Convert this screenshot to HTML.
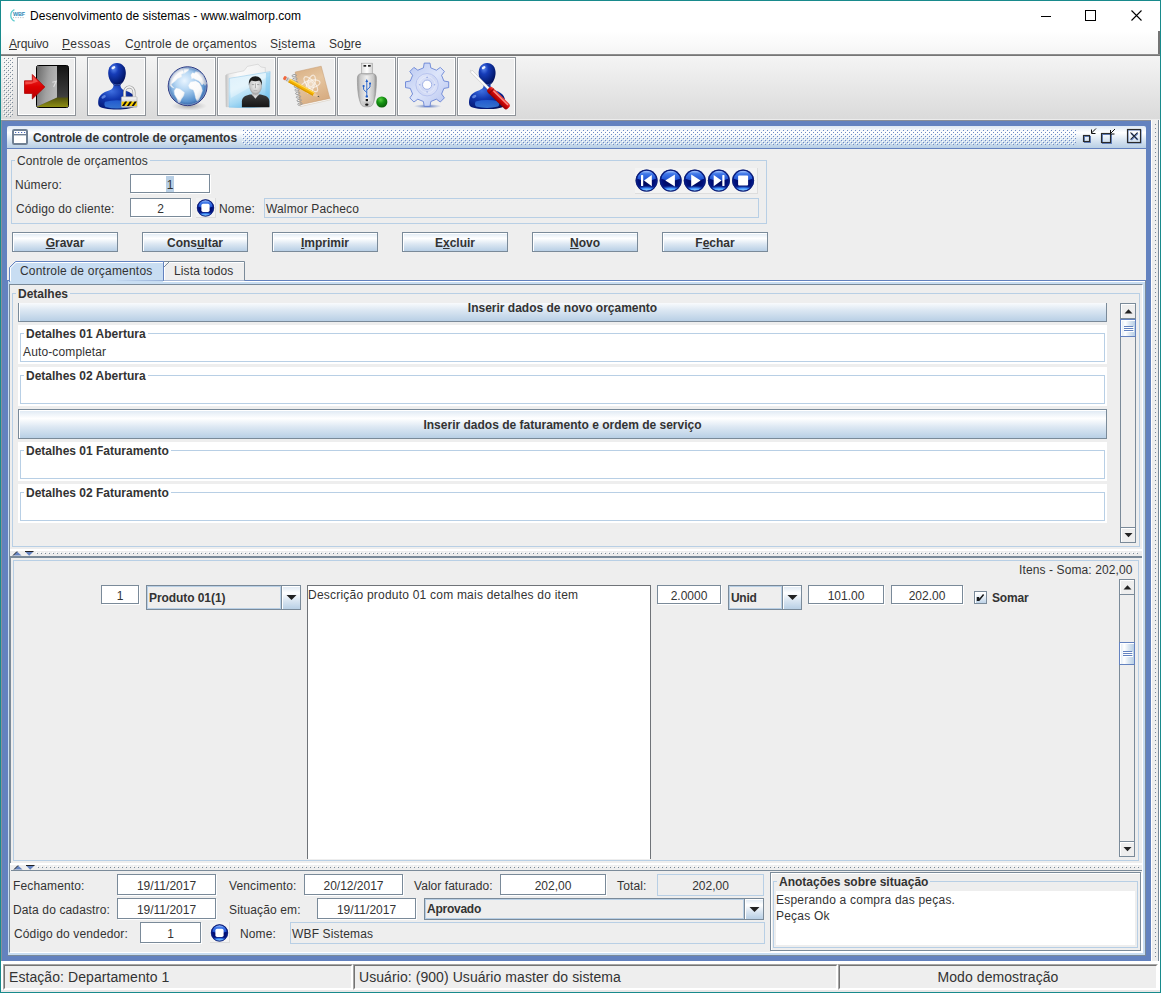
<!DOCTYPE html>
<html><head><meta charset="utf-8"><title>Desenvolvimento de sistemas</title>
<style>
*{box-sizing:border-box;margin:0;padding:0}
html,body{width:1161px;height:993px;overflow:hidden;background:#fff}
body{font-family:"Liberation Sans",sans-serif;font-size:12px;color:#333;position:relative}
.a{position:absolute}
svg{position:absolute;overflow:visible}
.t{position:absolute;white-space:nowrap;line-height:14px;font-size:12px;color:#333;letter-spacing:.13px}
.b{font-weight:bold;letter-spacing:0}
u{text-decoration:underline;text-underline-offset:1px;text-decoration-thickness:1px}
.tf{position:absolute;background:#fff;border:1px solid #7a8a99;box-shadow:1px 1px 0 #fff;text-align:center;line-height:14px;font-size:12px;color:#333;white-space:nowrap}
.ro{position:absolute;background:#eee;border:1px solid #b8cfe5;line-height:14px;font-size:12px;color:#333;white-space:nowrap}
.btn{position:absolute;border:1px solid #7a8a99;background:linear-gradient(#dde8f3 0%,#fff 30%,#dde8f3 60%,#b8cfe5 100%);text-align:center;font-weight:bold;font-size:12px;line-height:14px;color:#333;box-shadow:inset 1px 1px 0 #fff}
.tb{position:absolute;width:59px;height:59px;border:1px solid #8e9399;background:#eee;box-shadow:inset 1px 1px 0 #fff,inset -1px -1px 0 #fff}
.st{position:absolute;top:964px;height:26px;background:#eee;border-style:solid;border-width:1px;border-color:#a6a6a6 #fff #fff #a6a6a6;font-size:14px;line-height:16px;white-space:nowrap;color:#333;letter-spacing:.07px}
.st:before{content:"";position:absolute;left:0;top:0;right:0;bottom:0;border-style:solid;border-width:1px;border-color:#747474 #fff #fff #747474}
.st span{position:absolute;top:4px}
</style></head><body>
<div class="a" style="left:0px;top:0px;width:1161px;height:993px;border:1px solid #188a8c"></div>
<div class="t" style="left:30px;top:9px;color:#000;letter-spacing:.02px">Desenvolvimento de sistemas - www.walmorp.com</div>
<svg style="left:8px;top:8px" width="18" height="16" viewBox="0 0 18 16"><path d="M6.4 1.6A6.4 6.4 0 0 0 6.6 13.2" fill="none" stroke="#62ccd0" stroke-width="1.3"/><text x="5" y="7.7" font-family="Liberation Sans,sans-serif" font-size="5.4" font-weight="bold" fill="#2c86b6" textLength="12">WBF</text><path d="M5 9.6h12" stroke="#8a9aa6" stroke-width="0.7" stroke-dasharray="1 1.4"/></svg>
<svg style="left:1030px;top:1px" width="130" height="30" viewBox="0 0 130 30"><path d="M11 15.5h10" stroke="#000" stroke-width="1"/><rect x="55.5" y="9.5" width="10" height="10" fill="none" stroke="#000" stroke-width="1"/><path d="M101.5 9.5l10 10M111.5 9.5l-10 10" stroke="#000" stroke-width="1.1"/></svg>
<div class="a" style="left:1px;top:31px;width:1159px;height:88px;background:linear-gradient(#fff,#dadada)"></div>
<div class="a" style="left:1158px;top:31px;width:2px;height:24px;background:#757575"></div>
<div class="a" style="left:1px;top:54px;width:1159px;height:2px;background:linear-gradient(#9a9a9a,#6a6a6a)"></div>
<div class="t" style="left:9px;top:37px;letter-spacing:-0.15px"><u>A</u>rquivo</div>
<div class="t" style="left:62px;top:37px;letter-spacing:0.35px"><u>P</u>essoas</div>
<div class="t" style="left:125px;top:37px;letter-spacing:0.18px">C<u>o</u>ntrole de orçamentos</div>
<div class="t" style="left:270px;top:37px;letter-spacing:0.3px">S<u>i</u>stema</div>
<div class="t" style="left:329px;top:37px;letter-spacing:0.1px">So<u>b</u>re</div>
<svg style="left:3px;top:57px" width="10" height="60"><defs><pattern id="bp" width="4" height="4" patternUnits="userSpaceOnUse"><rect x="0" y="0" width="1" height="1" fill="#fff"/><rect x="1" y="1" width="1" height="1" fill="#7a8a99"/><rect x="2" y="2" width="1" height="1" fill="#fff"/><rect x="3" y="3" width="1" height="1" fill="#7a8a99"/></pattern></defs><rect width="10" height="60" fill="url(#bp)"/></svg>
<div class="tb" style="left:17px;top:57px"><svg style="left:-1px;top:-1px" width="59" height="59" viewBox="17 57 59 59"><defs><linearGradient id="d1" x1="0" y1="0" x2="0" y2="1"><stop offset="0" stop-color="#141414"/><stop offset="0.7" stop-color="#3c3c3c"/><stop offset="1" stop-color="#555"/></linearGradient>
<linearGradient id="d2" x1="0" y1="0" x2="1" y2="0.3"><stop offset="0" stop-color="#6a6a6a"/><stop offset="0.6" stop-color="#a2a2a2"/><stop offset="1" stop-color="#b6b6b6"/></linearGradient>
<linearGradient id="d3" x1="0" y1="0" x2="0" y2="1"><stop offset="0" stop-color="#50500e"/><stop offset="1" stop-color="#8e8e12"/></linearGradient>
<linearGradient id="d4" x1="0" y1="0" x2="0" y2="1"><stop offset="0" stop-color="#f03030"/><stop offset="0.5" stop-color="#dc0000"/><stop offset="1" stop-color="#b40000"/></linearGradient><radialGradient id="ub" cx="0.35" cy="0.3" r="0.9"><stop offset="0" stop-color="#3f6fe0"/><stop offset="0.35" stop-color="#1238b0"/><stop offset="0.75" stop-color="#051a78"/><stop offset="1" stop-color="#020c4a"/></radialGradient>
<radialGradient id="uh" cx="0.32" cy="0.25" r="0.85"><stop offset="0" stop-color="#5a88f0"/><stop offset="0.3" stop-color="#163cb8"/><stop offset="0.7" stop-color="#06207e"/><stop offset="1" stop-color="#010a48"/></radialGradient>
<linearGradient id="uc" x1="0" y1="0" x2="0" y2="1"><stop offset="0" stop-color="#2a6ae0"/><stop offset="1" stop-color="#4a98f4"/></linearGradient>
<g id="usr"><path d="M-3.4 9C-3.4 13.6 -4.3 14.9 -8 16.1C-14 18.1 -17.5 20.5 -18.5 25C-19 27.5 -19 30 -18.2 31.5C-16.5 34.2 -9 35.2 0 35.2C9 35.2 16.5 34.2 18.2 31.5C19 30 19 27.5 18.5 25C17.5 20.5 14 18.1 8 16.1C4.3 14.9 3.4 13.6 3.4 9Z" fill="url(#ub)"/>
<path d="M-12 27.5Q0 24.5 12 27.5Q13.5 30.5 11.5 32.6Q0 35.6 -11.5 32.6Q-13.5 30.5 -12 27.5Z" fill="url(#uc)" opacity="0.7"/>
<ellipse cx="-13.4" cy="22.6" rx="2.4" ry="1.4" fill="#8fb4ff" opacity="0.6" transform="rotate(-30 -13.4 22.6)"/>
<path d="M0 -11.4C5.6 -11.4 8.8 -7 8.8 -1.5C8.8 4 6.2 8.4 3.4 10.5C1.6 11.7 -1.6 11.7 -3.4 10.5C-6.2 8.4 -8.8 4 -8.8 -1.5C-8.8 -7 -5.6 -11.4 0 -11.4Z" fill="url(#uh)"/>
<ellipse cx="-3.6" cy="-6.6" rx="2.1" ry="1.3" fill="#fff" opacity="0.9" transform="rotate(-30 -3.6 -6.6)"/>
<path d="M-5.4 8Q0 12.4 5.4 8Q3 11.2 0 11.3Q-3 11.2 -5.4 8Z" fill="#6a98ff" opacity="0.5"/></g></defs>
<rect x="36.5" y="65.5" width="32" height="42" rx="2" fill="url(#d1)" stroke="#000"/>
<path d="M37 106.6L57 97.4H68V107H37Z" fill="url(#d3)"/>
<path d="M37 66H57V97.4L37 106.6Z" fill="url(#d2)"/>
<path d="M52.3 82.2L56.2 81.2L53.6 87" fill="none" stroke="#ddd" stroke-width="1.1"/>
<path d="M24.5 80.8H32.3V74.5L44.8 87L32.3 99V93.4H24.5Z" fill="url(#d4)" stroke="#b00000" stroke-width="0.8" stroke-linejoin="round"/>
<path d="M25.3 81.6H33.1V76.4L38 81.5Q32 84.5 25.3 84.6Z" fill="#ff7a70" opacity="0.55"/>
</svg></div>
<div class="tb" style="left:87px;top:57px"><svg style="left:-1px;top:-1px" width="59" height="59" viewBox="87 57 59 59"><defs><linearGradient id="lk" x1="0" y1="0" x2="0" y2="1"><stop offset="0" stop-color="#fafafa"/><stop offset="0.5" stop-color="#d6d6d6"/><stop offset="1" stop-color="#bdbdbd"/></linearGradient></defs>
<use href="#usr" transform="translate(117,74.3)"/>
<path d="M124.6 98V92.2A4.7 5.3 0 0 1 134 92.2V98" fill="none" stroke="#9a9a9a" stroke-width="3"/>
<path d="M124.6 98V92.2A4.7 5.3 0 0 1 134 92.2V98" fill="none" stroke="#f2f2f2" stroke-width="1.6"/>
<rect x="121.4" y="96.8" width="15.6" height="10.5" rx="0.8" fill="url(#lk)" stroke="#a8a8a8" stroke-width="0.6"/>
<rect x="121.7" y="101.6" width="15" height="4.4" fill="#f6cc00"/>
<path d="M122 106L125 101.6H127.2L124.2 106ZM126.8 106L129.8 101.6H132L129 106ZM131.6 106L134.6 101.6H136.7V101.8L133.8 106Z" fill="#111"/>
</svg></div>
<div class="tb" style="left:157px;top:57px"><svg style="left:-1px;top:-1px" width="59" height="59" viewBox="157 57 59 59"><defs><radialGradient id="gl" cx="0.42" cy="0.36" r="0.75"><stop offset="0" stop-color="#eaf5ff"/><stop offset="0.3" stop-color="#b8d8f4"/><stop offset="0.7" stop-color="#5e96d0"/><stop offset="1" stop-color="#2f64ae"/></radialGradient>
<linearGradient id="gc" x1="0" y1="0" x2="1" y2="1"><stop offset="0" stop-color="#fff"/><stop offset="0.6" stop-color="#fafafa"/><stop offset="1" stop-color="#cfd4da"/></linearGradient><radialGradient id="gh" cx="0.5" cy="0.5" r="0.5"><stop offset="0.8" stop-color="#1c3c80" stop-opacity="0"/><stop offset="1" stop-color="#1c3c80" stop-opacity="0.35"/></radialGradient>
<radialGradient id="gs" cx="0.5" cy="0.5" r="0.5"><stop offset="0" stop-color="#777" stop-opacity="0.6"/><stop offset="1" stop-color="#999" stop-opacity="0"/></radialGradient></defs>
<ellipse cx="189" cy="106" rx="18" ry="4.6" fill="url(#gs)"/>
<circle cx="187.6" cy="86.2" r="19.4" fill="url(#gl)" stroke="#28307f" stroke-width="1"/>
<g fill="url(#gc)" stroke="#dfe8f2" stroke-width="0.4" stroke-linejoin="round"><path d="M169.8 85.4L170.4 78.8L174.2 73.0L179.7 69.3L182.5 68.5L184.1 73.2L181.5 74.2L181.9 76.9L177.8 78.6L175.1 81.2L172.8 82.9L171.4 84.2L172.1 86.0L174.2 88.1L171.8 87.2Z"/><path d="M183.1 68.5L189.1 68.8L188.4 70.4L185.4 72.8L184.5 73.8Z"/><path d="M190.8 75.1L192.3 72.8L194.8 73.2L195.7 71.4L199.3 72.1L202.9 75.1L205.3 80.0L206.7 83.6L205.0 85.5L203.8 83.6L202.0 84.9L200.2 82.4L198.7 80.9L195.7 79.5L193.3 78.3L191.7 78.9Z"/><path d="M188.3 85.4L190.5 81.9L195.7 81.0L199.3 82.9L201.6 87.2L202.4 90.8L200.6 95.7L198.8 100.0L197.0 101.1L195.7 98.2L194.6 93.3L193.3 89.9L189.6 88.5Z"/><path d="M174.1 90.8L176.2 88.1L180.0 89.0L184.5 92.6L183.7 95.7L181.3 99.3L180.1 102.4L178.3 102.7L176.9 98.7L174.6 94.6Z"/></g><circle cx="187.6" cy="86.2" r="18.6" fill="none" stroke="#fff" stroke-opacity="0.55" stroke-width="0.7"/>
<circle cx="187.6" cy="86.2" r="19.4" fill="url(#gh)"/>
</svg></div>
<div class="tb" style="left:217px;top:57px"><svg style="left:-1px;top:-1px" width="59" height="59" viewBox="217 57 59 59"><defs><linearGradient id="fbk" x1="0" y1="0" x2="1" y2="0"><stop offset="0" stop-color="#bdbdbd"/><stop offset="0.1" stop-color="#ececec"/><stop offset="0.3" stop-color="#fafafa"/><stop offset="1" stop-color="#f1f1f1"/></linearGradient>
<linearGradient id="ffr" x1="0" y1="0" x2="0.5" y2="1"><stop offset="0" stop-color="#cfeafa"/><stop offset="0.45" stop-color="#d9f0fb"/><stop offset="0.75" stop-color="#a6d9f4"/><stop offset="1" stop-color="#6fbfeb"/></linearGradient>
<linearGradient id="psh" x1="0" y1="0" x2="0" y2="1"><stop offset="0" stop-color="#3a3a3a"/><stop offset="1" stop-color="#161616"/></linearGradient>
<radialGradient id="pfc" cx="0.5" cy="0.45" r="0.6"><stop offset="0" stop-color="#f4f4f4"/><stop offset="0.7" stop-color="#c8c8c8"/><stop offset="1" stop-color="#8a8a8a"/></radialGradient></defs>
<path d="M225.6 75.6Q226 74.6 227.5 74.2L244 70.8L247.4 66.4L258 64.2L261 67L265.3 67.6V104L226 106.8Z" fill="url(#fbk)" stroke="#c4c4c4" stroke-width="0.5"/>
<path d="M229.2 78.4L270.2 71.6L269.4 106.6Q250 108.5 229 107.2Z" fill="url(#ffr)" stroke="#8cc4e6" stroke-width="0.5"/>
<path d="M230 78.6L269.6 72.6L269.5 76L231 98Z" fill="#fff" opacity="0.3"/><path d="M266 73L270 72.2L269.4 106.4L265 106.8Z" fill="#7cc6ee" opacity="0.55"/>
<path d="M241.9 107.3V101.5C242 97.5 245 95.6 250 94.6H260.6C266 95.6 269.3 97.5 269.4 101.5V107.3Z" fill="url(#psh)"/>
<path d="M251.2 93.6L255.4 98.8L259.6 93.6Z" fill="#d8d8d8"/>
<rect x="252.3" y="90" width="6.2" height="5.5" fill="#bdbdbd"/>
<ellipse cx="255.6" cy="86" rx="6.3" ry="8.4" fill="url(#pfc)"/><path d="M255.4 83.4V88.2" stroke="#8a8a8a" stroke-width="0.7"/><path d="M251.8 84.6h2.4M257 84.6h2.4" stroke="#777" stroke-width="0.6"/><path d="M253.6 90.6h3.8" stroke="#999" stroke-width="0.5"/>
<path d="M248.9 85.5C248.3 79.5 250.8 76.4 255.4 76.3C260 76.4 262.5 79.5 261.9 85.5C261.4 82.6 260.4 81.3 259.2 80.6Q255.4 81.8 251.6 80.6C250.4 81.3 249.4 82.6 248.9 85.5Z" fill="#1a1a1a"/>
</svg></div>
<div class="tb" style="left:277px;top:57px"><svg style="left:-1px;top:-1px" width="59" height="59" viewBox="277 57 59 59"><defs><linearGradient id="nb" x1="0" y1="0" x2="0.4" y2="1"><stop offset="0" stop-color="#d6ac80"/><stop offset="0.5" stop-color="#e6c6a0"/><stop offset="1" stop-color="#d8ae84"/></linearGradient></defs>
<path d="M300.2 106.6L330.4 99.8L329.8 97.6L299.4 104Z" fill="#fbfbfb" stroke="#c9b8a0" stroke-width="0.4"/>
<path d="M295.2 72L321.2 66.2L329.8 98.4L300.4 104.8Z" fill="url(#nb)" stroke="#c49a70" stroke-width="0.5"/>
<g fill="none" stroke="#fff" stroke-opacity="0.62" stroke-width="1.25" transform="translate(310.8,84.2) rotate(-12)"><ellipse rx="9.4" ry="3.8"/><ellipse rx="9.4" ry="3.8" transform="rotate(60)"/><ellipse rx="9.4" ry="3.8" transform="rotate(120)"/><circle r="2.6" fill="#fff" fill-opacity="0.35"/></g>
<ellipse cx="294.2" cy="75.6" rx="2.3" ry="1.1" fill="none" stroke="#9a9a9a" stroke-width="0.9" transform="rotate(-14 294.2 75.6)"/><ellipse cx="294.9" cy="79.1" rx="2.3" ry="1.1" fill="none" stroke="#9a9a9a" stroke-width="0.9" transform="rotate(-14 294.9 79.1)"/><ellipse cx="295.6" cy="82.7" rx="2.3" ry="1.1" fill="none" stroke="#9a9a9a" stroke-width="0.9" transform="rotate(-14 295.6 82.7)"/><ellipse cx="296.4" cy="86.2" rx="2.3" ry="1.1" fill="none" stroke="#9a9a9a" stroke-width="0.9" transform="rotate(-14 296.4 86.2)"/><ellipse cx="297.1" cy="89.8" rx="2.3" ry="1.1" fill="none" stroke="#9a9a9a" stroke-width="0.9" transform="rotate(-14 297.1 89.8)"/><ellipse cx="297.8" cy="93.3" rx="2.3" ry="1.1" fill="none" stroke="#9a9a9a" stroke-width="0.9" transform="rotate(-14 297.8 93.3)"/><ellipse cx="298.5" cy="96.9" rx="2.3" ry="1.1" fill="none" stroke="#9a9a9a" stroke-width="0.9" transform="rotate(-14 298.5 96.9)"/><ellipse cx="299.2" cy="100.4" rx="2.3" ry="1.1" fill="none" stroke="#9a9a9a" stroke-width="0.9" transform="rotate(-14 299.2 100.4)"/><ellipse cx="300.0" cy="104.0" rx="2.3" ry="1.1" fill="none" stroke="#9a9a9a" stroke-width="0.9" transform="rotate(-14 300.0 104.0)"/>
<g transform="translate(283.6,77.4) rotate(28.8)">
<rect x="0" y="-2" width="3.2" height="4" rx="1.3" fill="#f0663c"/><rect x="3" y="-2" width="3.4" height="4" fill="#cfcfcf"/><rect x="4" y="-2" width="0.6" height="4" fill="#8c8c8c"/>
<rect x="6.4" y="-2" width="28" height="4" fill="#f6b400"/><rect x="6.4" y="-2" width="28" height="1.3" fill="#ffd95a"/><rect x="6.4" y="0.9" width="28" height="1.1" fill="#d89600"/>
<path d="M34.4 -2L41 0L34.4 2Z" fill="#ecc9a0"/><path d="M39 -0.62L41.2 0L39 0.62Z" fill="#333"/></g>
</svg></div>
<div class="tb" style="left:337px;top:57px"><svg style="left:-1px;top:-1px" width="59" height="59" viewBox="337 57 59 59"><defs><linearGradient id="uc1" x1="0" y1="0" x2="1" y2="0"><stop offset="0" stop-color="#dcdcdc"/><stop offset="0.5" stop-color="#fff"/><stop offset="1" stop-color="#d0d0d0"/></linearGradient>
<linearGradient id="uc2" x1="0" y1="0" x2="1" y2="0"><stop offset="0" stop-color="#9c9c9c"/><stop offset="0.2" stop-color="#d0d0d0"/><stop offset="0.5" stop-color="#c2c2c2"/><stop offset="0.8" stop-color="#d0d0d0"/><stop offset="1" stop-color="#8e8e8e"/></linearGradient>
<linearGradient id="uc3" x1="0" y1="0" x2="1" y2="0"><stop offset="0" stop-color="#c6c6c6"/><stop offset="0.5" stop-color="#f0f0f0"/><stop offset="1" stop-color="#c0c0c0"/></linearGradient>
<radialGradient id="ug" cx="0.4" cy="0.3" r="0.8"><stop offset="0" stop-color="#58d040"/><stop offset="0.4" stop-color="#169414"/><stop offset="1" stop-color="#075207"/></radialGradient></defs>
<rect x="361.4" y="63.2" width="11.2" height="11" fill="url(#uc1)" stroke="#a4a4a4" stroke-width="0.6"/>
<rect x="363.5" y="65" width="2.7" height="1.7" fill="#222"/><rect x="368" y="65" width="2.7" height="1.7" fill="#222"/>
<path d="M357.4 78.5C357.4 75 359 73.6 362 73.6H372C375 73.6 376.4 75 376.4 78.5C376.4 90 375.4 99 372.6 104.5C371.5 106.4 370 106.8 366.9 106.8C363.8 106.8 362.3 106.4 361.2 104.5C358.4 99 357.4 90 357.4 78.5Z" fill="url(#uc2)" stroke="#8e8e8e" stroke-width="0.6"/>
<path d="M359.5 78C359.5 76 360.5 75.2 362.5 75.2H371.3C373.3 75.2 374.3 76 374.3 78C374.3 88 373.6 96 371.6 101Q366.9 102.6 362.2 101C360.2 96 359.5 88 359.5 78Z" fill="url(#uc3)"/>
<g stroke="#1c5cc8" stroke-width="0.9" fill="none"><path d="M366.8 96V81"/><path d="M366.8 92.5L363.6 89.5V86.6"/><path d="M366.8 90L370 87V84.4"/></g>
<path d="M366.8 79L365.4 82H368.2Z" fill="#1c5cc8"/><circle cx="363.6" cy="86" r="1.1" fill="#1c5cc8"/><rect x="369.1" y="82.6" width="1.9" height="1.9" fill="#1c5cc8"/><circle cx="366.8" cy="96.4" r="1.2" fill="#1c5cc8"/>
<rect x="365.7" y="99" width="2.3" height="2.2" fill="#111"/><ellipse cx="366.8" cy="104.6" rx="1.7" ry="1.2" fill="#111"/>
<circle cx="381.8" cy="102" r="5.6" fill="url(#ug)"/>
</svg></div>
<div class="tb" style="left:397px;top:57px"><svg style="left:-1px;top:-1px" width="59" height="59" viewBox="397 57 59 59"><defs><linearGradient id="gg" x1="0" y1="0" x2="1" y2="1"><stop offset="0" stop-color="#b6c5f0"/><stop offset="0.5" stop-color="#dde5fa"/><stop offset="1" stop-color="#b4c2ee"/></linearGradient>
<linearGradient id="gg2" x1="0" y1="0" x2="1" y2="1"><stop offset="0" stop-color="#e6ebfb"/><stop offset="0.5" stop-color="#cfd8f4"/><stop offset="1" stop-color="#dfe5f9"/></linearGradient>
<radialGradient id="gsh" cx="0.5" cy="0.5" r="0.5"><stop offset="0" stop-color="#3c5cae" stop-opacity="0.85"/><stop offset="1" stop-color="#6c88c8" stop-opacity="0"/></radialGradient></defs>
<ellipse cx="427.6" cy="106.2" rx="14" ry="2.2" fill="url(#gsh)"/>
<path d="M423.4 67.9L424.2 63.1L430.0 63.1L430.8 67.9L436.4 70.2L440.3 67.4L444.4 71.5L441.6 75.4L443.9 81.0L448.7 81.8L448.7 87.6L443.9 88.4L441.6 94.0L444.4 97.9L440.3 102.0L436.4 99.2L430.8 101.5L430.0 106.3L424.2 106.3L423.4 101.5L417.8 99.2L413.9 102.0L409.8 97.9L412.6 94.0L410.3 88.4L405.5 87.6L405.5 81.8L410.3 81.0L412.6 75.4L409.8 71.5L413.9 67.4L417.8 70.2Z" fill="url(#gg)" stroke="#5c7ad2" stroke-width="0.8" stroke-linejoin="round"/>
<circle cx="427.1" cy="84.7" r="11.2" fill="url(#gg2)" stroke="#aebcec" stroke-width="0.8"/>
<circle cx="427.1" cy="84.7" r="8" fill="none" stroke="#eef2fc" stroke-width="0.6" opacity="0.8"/>
<circle cx="427.1" cy="84.7" r="4.6" fill="#fdfdfe" stroke="#8ea2e0" stroke-width="0.8"/>
<g fill="#93a6e2"><path d="M427.1 76.3l1 1.6h-2z"/><path d="M427.1 93.1l1 -1.6h-2z"/><path d="M418.7 84.7l1.6 1v-2z"/><path d="M435.5 84.7l-1.6 1v-2z"/></g>
</svg></div>
<div class="tb" style="left:457px;top:57px"><svg style="left:-1px;top:-1px" width="59" height="59" viewBox="457 57 59 59"><defs><linearGradient id="sm" x1="0" y1="1" x2="1" y2="0"><stop offset="0" stop-color="#8a8a8a"/><stop offset="0.5" stop-color="#fdfdfd"/><stop offset="1" stop-color="#9c9c9c"/></linearGradient>
<linearGradient id="sr" x1="0" y1="0" x2="0" y2="1"><stop offset="0" stop-color="#f04a40"/><stop offset="0.45" stop-color="#d40808"/><stop offset="1" stop-color="#8e0000"/></linearGradient></defs>
<use href="#usr" transform="translate(487.1,74.2) scale(0.96,0.99)"/>
<path d="M470.6 70.2L471.9 71.2L472.5 70.5L490 88.2L488.2 90L470.2 72Z" fill="url(#sm)" stroke="#9a9a9a" stroke-width="0.3"/>
<g transform="translate(488.6,88.4) rotate(44.5)"><rect x="0" y="-3.5" width="27.8" height="7" rx="2.6" fill="url(#sr)"/><rect x="3.4" y="-3.5" width="1.1" height="7" fill="#7a0000" opacity="0.7"/><rect x="5" y="-2.4" width="20.5" height="1.4" rx="0.7" fill="#ffa49a" opacity="0.85"/></g>
</svg></div>
<div class="a" style="left:1px;top:119px;width:1159px;height:1px;background:#ececec"></div>
<div class="a" style="left:1px;top:120px;width:1159px;height:1px;background:#8a8f98"></div>
<div class="a" style="left:1px;top:120px;width:1px;height:841px;background:#8a929a"></div>
<div class="a" style="left:2px;top:121px;width:1149px;height:840px;background:#6382bf"></div>
<div class="a" style="left:1151px;top:120px;width:9px;height:841px;background:#eee"></div>
<div class="a" style="left:1151px;top:120px;width:1px;height:841px;background:#fff"></div>
<div class="a" style="left:1158px;top:120px;width:1px;height:841px;background:#7a8a99"></div>
<div class="a" style="left:1159px;top:120px;width:1px;height:841px;background:#fff"></div>
<svg style="left:1155px;top:124px" width="1" height="834"><defs><pattern id="vd" width="1" height="4" patternUnits="userSpaceOnUse"><rect width="1" height="1" fill="#7a8a99"/></pattern></defs><rect width="1" height="834" fill="url(#vd)"/></svg>
<div class="a" style="left:7px;top:126px;width:1139px;height:22px;background:linear-gradient(#dde8f3 0%,#fff 30%,#dde8f3 60%,#b8cfe5 100%);border-radius:2px 2px 0 0"></div>
<div class="a" style="left:7px;top:148px;width:1139px;height:1px;background:#6382bf"></div>
<div class="a" style="left:7px;top:149px;width:1139px;height:807px;background:#eee"></div>
<svg style="left:242px;top:129px" width="834" height="16"><defs><pattern id="fb" width="4" height="4" patternUnits="userSpaceOnUse"><rect x="0" y="0" width="1" height="1" fill="#fff"/><rect x="1" y="1" width="1" height="1" fill="#6c8ac6"/><rect x="2" y="2" width="1" height="1" fill="#fff"/><rect x="3" y="3" width="1" height="1" fill="#6c8ac6"/></pattern></defs><rect width="834" height="16" fill="url(#fb)"/></svg>
<svg style="left:12px;top:129px" width="16" height="16" viewBox="0 0 16 16"><rect x="1" y="1" width="14" height="14" rx="1.2" fill="#fff" stroke="#6f8093" stroke-width="2"/><rect x="2" y="5" width="12" height="1.4" fill="#6f8093"/><path d="M3 3.5h1.2M6 3.5h1.2M9 3.5h1.2M12 3.5h1.2" stroke="#4a6cc0" stroke-width="1.1"/></svg>
<div class="t b" style="left:33px;top:131px;letter-spacing:-.06px">Controle de controle de orçamentos</div>
<svg style="left:1080px;top:126px" width="66" height="22" viewBox="0 0 66 22">
<g fill="none" stroke-width="1">
<rect x="4.5" y="10.5" width="6" height="6" stroke="#6382bf"/><rect x="3.5" y="9.5" width="6" height="6" stroke="#2a2a2a" stroke-width="1.15"/>
<path d="M16 2.5L11.5 7M11.5 3.5V7.5H15.5" stroke="#111"/>
<rect x="22.5" y="8.5" width="9" height="9" stroke="#6382bf"/><rect x="21.5" y="7.5" width="9" height="9" stroke="#2a2a2a" stroke-width="1.15"/>
<path d="M35 3L30.5 7.5M30.5 4V8H34.5" stroke="#111"/>
<rect x="48" y="4" width="13" height="13" stroke="#6382bf"/><rect x="47.5" y="3.5" width="13" height="13" stroke="#2a2a2a" stroke-width="1.15"/>
<path d="M51.2 7.2l6.6 6.6M57.8 7.2l-6.6 6.6" stroke="#6382bf" stroke-width="1.8"/><path d="M50.5 6.5l7 7M57.5 6.5l-7 7" stroke="#1a1a1a" stroke-width="1.05"/>
</g></svg>
<div class="a" style="left:11px;top:160px;width:756px;height:64px;border:1px solid #b8cfe5"></div>
<div class="t" style="left:15px;top:154px;padding:0 2px;background:#eee">Controle de orçamentos</div>
<div class="t" style="left:15px;top:178px;">Número:</div>
<div class="t" style="left:16px;top:202px;">Código do cliente:</div>
<div class="tf" style="left:130px;top:174px;width:80px;height:19px;padding-top:3px;background:linear-gradient(#b8cfe5,#b8cfe5) no-repeat 35px 1px / 8px 16px,#fff">1</div>
<div class="tf" style="left:130px;top:198px;width:61px;height:19px;padding-top:3px;">2</div>
<div class="a" style="left:196px;top:198px;width:20px;height:20px;background:#f2f2f2;box-shadow:inset -1px -1px 0 #ddd"><svg width="20" height="20" viewBox="0 0 20 20"><use href="#navc" transform="translate(9.5,9.9) scale(0.78)"/><rect x="5.4" y="5.8" width="8.2" height="8.2" rx="1.7" fill="#fff"/></svg></div>
<div class="t" style="left:219px;top:202px;">Nome:</div>
<div class="ro" style="left:264px;top:198px;width:495px;height:20px;padding-top:3px;padding-left:1px;letter-spacing:.15px">Walmor Pacheco</div>
<svg style="left:0;top:0" width="0" height="0"><defs>
<radialGradient id="ng1" cx="0.5" cy="0.5" r="0.5"><stop offset="0" stop-color="#00064e"/><stop offset="0.75" stop-color="#00107a"/><stop offset="0.92" stop-color="#051c8c"/><stop offset="1" stop-color="#1c308c"/></radialGradient>
<linearGradient id="ng2" x1="0" y1="0" x2="0" y2="1"><stop offset="0" stop-color="#a8c8ff"/><stop offset="0.3" stop-color="#4078e8"/><stop offset="1" stop-color="#1a4cd0"/></linearGradient>
<radialGradient id="ng3" cx="0.5" cy="1" r="0.75"><stop offset="0" stop-color="#a4e6ff"/><stop offset="0.5" stop-color="#4090ff" stop-opacity="0.97"/><stop offset="1" stop-color="#0a2aa0" stop-opacity="0"/></radialGradient>
<g id="navc"><circle r="11" fill="url(#ng1)"/><path d="M-9.3 -1.8A9.4 9.4 0 0 1 9.3 -1.8Q5 0.2 0 0.2T-9.3 -1.8Z" fill="url(#ng2)"/><path d="M-9.8 2.8Q0 5.6 9.8 2.8A10.2 10.2 0 0 1 -9.8 2.8Z" fill="url(#ng3)"/><circle r="10.6" fill="none" stroke="#0a1a6e" stroke-width="0.9" stroke-opacity="0.85"/></g>
</defs></svg>
<div class="a" style="left:635px;top:168px;width:123px;height:26px;background:#f3f3f3;box-shadow:inset -1px -1px 0 #ddd"></div>
<svg style="left:635px;top:168px" width="123" height="26" viewBox="0 0 123 26"><g transform="translate(11.6,12.6)"><use href="#navc"/><rect x="-5.6" y="-5.5" width="2.2" height="11" rx="0.6" fill="#fff"/><path d="M5.2 -5.6V5.6L-2.6 0Z" fill="#fff"/></g><g transform="translate(35.7,12.6)"><use href="#navc"/><path d="M4.2 -6V6L-5.4 0Z" fill="#fff"/></g><g transform="translate(59.8,12.6)"><use href="#navc"/><path d="M-3.6 -6V6L5.8 0Z" fill="#fff"/></g><g transform="translate(83.9,12.6)"><use href="#navc"/><rect x="3.4" y="-5.5" width="2.2" height="11" rx="0.6" fill="#fff"/><path d="M-5.2 -5.6V5.6L2.6 0Z" fill="#fff"/></g><g transform="translate(108.1,12.6)"><use href="#navc"/><rect x="-5" y="-5" width="10" height="10" rx="1" fill="#fff"/></g></svg>
<div class="btn" style="left:12px;top:232px;width:106px;height:20px;padding-top:3px"><u>G</u>ravar</div>
<div class="btn" style="left:142px;top:232px;width:106px;height:20px;padding-top:3px">Cons<u>u</u>ltar</div>
<div class="btn" style="left:272px;top:232px;width:106px;height:20px;padding-top:3px"><u>I</u>mprimir</div>
<div class="btn" style="left:402px;top:232px;width:106px;height:20px;padding-top:3px">E<u>x</u>cluir</div>
<div class="btn" style="left:532px;top:232px;width:106px;height:20px;padding-top:3px"><u>N</u>ovo</div>
<div class="btn" style="left:662px;top:232px;width:106px;height:20px;padding-top:3px">F<u>e</u>char</div>
<div class="a" style="left:7px;top:280px;width:1139px;height:676px;background:#c8ddf2;border:1px solid;border-color:#6382bf #7a8a99 #7a8a99 #6382bf"></div>
<div class="a" style="left:8px;top:281px;width:1137px;height:1px;background:#fff"></div>
<svg style="left:7px;top:260px" width="250" height="22" viewBox="0 0 250 22">
<path d="M156.5 20.5V1.5H237.5V20.5" fill="#eee" stroke="#7a8a99"/>
<path d="M157.5 20V2.5H237" fill="none" stroke="#fff"/>
<path d="M162.5 1.5L156.5 7.5" stroke="#7a8a99" fill="none"/>
<path d="M2.5 22V7.5L8.5 1.5H156.5V20.5H157" fill="#c8ddf2" stroke="#6382bf"/>
<path d="M3.5 21V8L9 2.5H156" fill="none" stroke="#fff"/>
<rect x="1" y="21" width="155" height="1" fill="#c8ddf2"/><rect x="2" y="20" width="1" height="2" fill="#6382bf"/>
</svg>
<div class="t" style="left:20px;top:264px;letter-spacing:.2px">Controle de orçamentos</div>
<div class="t" style="left:174px;top:264px;">Lista todos</div>
<div class="a" style="left:9px;top:284px;width:1134px;height:669px;background:#eee;border:1px solid;border-color:#7a8a99 #fff #fff #7a8a99"></div>
<div class="a" style="left:12px;top:293px;width:1128px;height:254px;border:1px solid #b8cfe5"></div>
<div class="t b" style="left:16px;top:287px;padding:0 2px;background:#eee">Detalhes</div>
<div class="a" style="left:18px;top:303px;width:1089px;height:242px;overflow:hidden">
<div class="btn" style="left:0;top:-11px;width:1089px;height:30px;padding-top:8px">Inserir dados de novo orçamento</div>
<div class="btn" style="left:0;top:106px;width:1089px;height:30px;padding-top:8px">Inserir dados de faturamento e ordem de serviço</div>
<div class="a" style="left:0px;top:22px;width:1089px;height:39px;background:#fff"></div>
<div class="a" style="left:2px;top:30px;width:1085px;height:29px;border:1px solid #b8cfe5"></div>
<div class="t b" style="left:6px;top:24px;padding:0 2px;background:#fff">Detalhes 01 Abertura</div>
<div class="t" style="left:5px;top:42px">Auto-completar</div>
<div class="a" style="left:0px;top:64px;width:1089px;height:39px;background:#fff"></div>
<div class="a" style="left:2px;top:72px;width:1085px;height:29px;border:1px solid #b8cfe5"></div>
<div class="t b" style="left:6px;top:66px;padding:0 2px;background:#fff">Detalhes 02 Abertura</div>
<div class="a" style="left:0px;top:139px;width:1089px;height:39px;background:#fff"></div>
<div class="a" style="left:2px;top:147px;width:1085px;height:29px;border:1px solid #b8cfe5"></div>
<div class="t b" style="left:6px;top:141px;padding:0 2px;background:#fff">Detalhes 01 Faturamento</div>
<div class="a" style="left:0px;top:181px;width:1089px;height:39px;background:#fff"></div>
<div class="a" style="left:2px;top:189px;width:1085px;height:29px;border:1px solid #b8cfe5"></div>
<div class="t b" style="left:6px;top:183px;padding:0 2px;background:#fff">Detalhes 02 Faturamento</div>
</div>
<div class="a" style="left:1120px;top:303px;width:16px;height:240px;background:#eee;border-left:1px solid #7a8a99;border-right:1px solid #7a8a99"></div>
<div class="a" style="left:1120px;top:303px;width:16px;height:16px;background:#eee;border:1px solid #7a8a99;box-shadow:inset 1px 1px 0 #fff"><svg width="14" height="14" style="left:0;top:0"><path d="M3.5 9.5h8l-4-4.2z" fill="#222"/></svg></div>
<div class="a" style="left:1120px;top:527px;width:16px;height:16px;background:#eee;border:1px solid #7a8a99;box-shadow:inset 1px 1px 0 #fff"><svg width="14" height="14" style="left:0;top:0"><path d="M3.5 5h8l-4 4.2z" fill="#222"/></svg></div>
<div class="a" style="left:1120px;top:319px;width:16px;height:18px;background:linear-gradient(90deg,#dde8f3 0%,#fff 30%,#dde8f3 60%,#b8cfe5 100%);border:1px solid #6382bf;box-shadow:inset 1px 1px 0 #fff"><svg width="14" height="16" style="left:0;top:0"><g transform="translate(3,6)"><path d="M0 0.5h9M0 2.5h9M0 4.5h9" stroke="#6382bf"/><path d="M1 1.5h9M1 3.5h9M1 5.5h9" stroke="#fff"/></g></svg></div>
<div class="a" style="left:10px;top:549px;width:1132px;height:7px;background:#eee"></div>
<div class="a" style="left:10px;top:549px;width:1132px;height:2px;background:#fff"></div>
<svg style="left:21px;top:552px" width="1119" height="2"><defs><pattern id="dv549" width="4" height="4" patternUnits="userSpaceOnUse"><rect x="3" y="0" width="1" height="1" fill="#fff"/><rect x="0" y="1" width="1" height="1" fill="#7a8a99"/></pattern></defs><rect width="1119" height="2" fill="url(#dv549)"/></svg>
<svg style="left:13px;top:551px" width="22" height="5" viewBox="0 0 22 5"><rect width="21" height="5" fill="#eee"/><path d="M0 4.5L4 0.5L8.5 4.5Z" fill="#6382bf"/><path d="M0 4.5L4 0.5" stroke="#222" fill="none"/><path d="M12 0.5H20.5L16.2 4.8Z" fill="#6382bf"/><path d="M12 0.5H20.5" stroke="#222" fill="none"/></svg>
<div class="a" style="left:9px;top:556px;width:1133px;height:1px;background:#7a8a99"></div>
<div class="a" style="left:10px;top:557px;width:1132px;height:306px;background:#eee;border-top:1px solid #7a8a99;border-left:1px solid #7a8a99"></div>
<div class="a" style="left:13px;top:560px;width:1126px;height:301px;border:1px solid #b8cfe5"></div>
<div class="t" style="left:1019px;top:563px;letter-spacing:.11px">Itens - Soma: 202,00</div>
<div class="tf" style="left:101px;top:585px;width:38px;height:19px;padding-top:3px;">1</div>
<div class="a" style="left:146px;top:585px;width:155px;height:25px;background:#eee;border:1px solid #7a8a99"></div>
<div class="a" style="left:147px;top:586px;width:134px;height:23px;border:1px solid #b8cfe5"></div>
<div class="a" style="left:281px;top:586px;width:19px;height:23px;background:linear-gradient(#dde8f3 0%,#fff 30%,#dde8f3 60%,#b8cfe5 100%);border-left:1px solid #7a8a99;box-shadow:inset 1px 1px 0 #fff"><svg width="18" height="23" style="left:0;top:0"><path d="M4.5 9h10l-5 5z" fill="#222"/></svg></div>
<div class="t b" style="left:149px;top:591px;letter-spacing:-0.07px">Produto 01(1)</div>
<div class="a" style="left:307px;top:585px;width:344px;height:274px;background:#fff;border:1px solid #6f7378;border-bottom:none"></div>
<div class="t" style="left:308px;top:588px;letter-spacing:.22px">Descrição produto 01 com mais detalhes do item</div>
<div class="tf" style="left:657px;top:585px;width:64px;height:19px;padding-top:3px;">2.0000</div>
<div class="a" style="left:728px;top:585px;width:74px;height:25px;background:#eee;border:1px solid #7a8a99"></div>
<div class="a" style="left:729px;top:586px;width:53px;height:23px;border:1px solid #b8cfe5"></div>
<div class="a" style="left:782px;top:586px;width:19px;height:23px;background:linear-gradient(#dde8f3 0%,#fff 30%,#dde8f3 60%,#b8cfe5 100%);border-left:1px solid #7a8a99;box-shadow:inset 1px 1px 0 #fff"><svg width="18" height="23" style="left:0;top:0"><path d="M4.5 9h10l-5 5z" fill="#222"/></svg></div>
<div class="t b" style="left:731px;top:591px;letter-spacing:-0.3px">Unid</div>
<div class="tf" style="left:808px;top:585px;width:76px;height:19px;padding-top:3px;">101.00</div>
<div class="tf" style="left:891px;top:585px;width:72px;height:19px;padding-top:3px;">202.00</div>
<div class="a" style="left:974px;top:591px;width:13px;height:13px;background:linear-gradient(#fff 10%,#e4edf6 50%,#bdd2e7);border:1px solid #7a8a99;box-shadow:inset 1px 1px 0 #fff"><svg width="11" height="11" style="left:0;top:0"><path d="M2.5 5V9M3.5 5V9M4 8.2L8.6 2.6" stroke="#1a1a1a" stroke-width="1.5" fill="none"/></svg></div>
<div class="t b" style="left:992px;top:591px;letter-spacing:-.2px">Somar</div>
<div class="a" style="left:1119px;top:579px;width:16px;height:278px;background:#eee;border-left:1px solid #7a8a99;border-right:1px solid #7a8a99"></div>
<div class="a" style="left:1119px;top:579px;width:16px;height:16px;background:#eee;border:1px solid #7a8a99;box-shadow:inset 1px 1px 0 #fff"><svg width="14" height="14" style="left:0;top:0"><path d="M3.5 9.5h8l-4-4.2z" fill="#222"/></svg></div>
<div class="a" style="left:1119px;top:841px;width:16px;height:16px;background:#eee;border:1px solid #7a8a99;box-shadow:inset 1px 1px 0 #fff"><svg width="14" height="14" style="left:0;top:0"><path d="M3.5 5h8l-4 4.2z" fill="#222"/></svg></div>
<div class="a" style="left:1119px;top:642px;width:16px;height:23px;background:linear-gradient(90deg,#dde8f3 0%,#fff 30%,#dde8f3 60%,#b8cfe5 100%);border:1px solid #6382bf;box-shadow:inset 1px 1px 0 #fff"><svg width="14" height="21" style="left:0;top:0"><g transform="translate(3,8)"><path d="M0 0.5h9M0 2.5h9M0 4.5h9" stroke="#6382bf"/><path d="M1 1.5h9M1 3.5h9M1 5.5h9" stroke="#fff"/></g></svg></div>
<div class="a" style="left:10px;top:863px;width:1132px;height:7px;background:#eee"></div>
<div class="a" style="left:10px;top:863px;width:1132px;height:2px;background:#fff"></div>
<svg style="left:22px;top:866px" width="1118" height="2"><defs><pattern id="dv863" width="4" height="4" patternUnits="userSpaceOnUse"><rect x="3" y="0" width="1" height="1" fill="#fff"/><rect x="0" y="1" width="1" height="1" fill="#7a8a99"/></pattern></defs><rect width="1118" height="2" fill="url(#dv863)"/></svg>
<svg style="left:14px;top:865px" width="22" height="5" viewBox="0 0 22 5"><rect width="21" height="5" fill="#eee"/><path d="M0 4.5L4 0.5L8.5 4.5Z" fill="#6382bf"/><path d="M0 4.5L4 0.5" stroke="#222" fill="none"/><path d="M12 0.5H20.5L16.2 4.8Z" fill="#6382bf"/><path d="M12 0.5H20.5" stroke="#222" fill="none"/></svg>
<div class="a" style="left:11px;top:870px;width:1131px;height:1px;background:#7a8a99"></div>
<div class="t" style="left:13px;top:879px;">Fechamento:</div>
<div class="tf" style="left:117px;top:874px;width:99px;height:21px;padding-top:4px;">19/11/2017</div>
<div class="t" style="left:229px;top:879px;">Vencimento:</div>
<div class="tf" style="left:304px;top:874px;width:99px;height:21px;padding-top:4px;">20/12/2017</div>
<div class="t" style="left:414px;top:879px;letter-spacing:.05px">Valor faturado:</div>
<div class="tf" style="left:500px;top:874px;width:106px;height:21px;padding-top:4px;">202,00</div>
<div class="t" style="left:617px;top:879px;">Total:</div>
<div class="ro" style="left:657px;top:874px;width:107px;height:22px;padding-top:4px;text-align:center">202,00</div>
<div class="t" style="left:13px;top:903px;">Data do cadastro:</div>
<div class="tf" style="left:117px;top:898px;width:99px;height:21px;padding-top:4px;">19/11/2017</div>
<div class="t" style="left:229px;top:903px;">Situação em:</div>
<div class="tf" style="left:317px;top:898px;width:99px;height:21px;padding-top:4px;">19/11/2017</div>
<div class="a" style="left:424px;top:898px;width:340px;height:22px;background:#eee;border:1px solid #7a8a99"></div>
<div class="a" style="left:425px;top:899px;width:319px;height:20px;border:1px solid #b8cfe5"></div>
<div class="a" style="left:744px;top:899px;width:19px;height:20px;background:linear-gradient(#dde8f3 0%,#fff 30%,#dde8f3 60%,#b8cfe5 100%);border-left:1px solid #7a8a99;box-shadow:inset 1px 1px 0 #fff"><svg width="18" height="20" style="left:0;top:0"><path d="M4.5 8h10l-5 5z" fill="#222"/></svg></div>
<div class="t b" style="left:427px;top:902px;letter-spacing:-0.25px">Aprovado</div>
<div class="t" style="left:14px;top:927px;">Código do vendedor:</div>
<div class="tf" style="left:140px;top:922px;width:61px;height:21px;padding-top:4px;">1</div>
<div class="a" style="left:210px;top:922px;width:20px;height:21px;background:#f2f2f2;box-shadow:inset -1px -1px 0 #ddd"><svg width="20" height="20" viewBox="0 -1 20 20"><use href="#navc" transform="translate(9.5,9.9) scale(0.78)"/><rect x="5.4" y="5.8" width="8.2" height="8.2" rx="1.7" fill="#fff"/></svg></div>
<div class="t" style="left:240px;top:927px;">Nome:</div>
<div class="ro" style="left:290px;top:922px;width:475px;height:22px;padding-top:4px;padding-left:1px;letter-spacing:.15px">WBF Sistemas</div>
<div class="a" style="left:770px;top:872px;width:371px;height:79px;border:1px solid #7a8a99;box-shadow:inset 1px 1px 0 #fff, 1px 1px 0 #fff"></div>
<div class="a" style="left:773px;top:881px;width:365px;height:67px;border:1px solid #b8cfe5"></div>
<div class="t b" style="left:777px;top:875px;padding:0 2px;background:#eee">Anotações sobre situação</div>
<div class="a" style="left:776px;top:891px;width:359px;height:54px;background:#fff"></div>
<div class="t" style="left:776px;top:893px;letter-spacing:.22px">Esperando a compra das peças.</div>
<div class="t" style="left:776px;top:909px;letter-spacing:.22px">Peças Ok</div>
<div class="a" style="left:1px;top:961px;width:1159px;height:31px;background:#fff"></div>
<div class="a" style="left:1px;top:990px;width:1159px;height:2px;background:#e8e8e8"></div>
<div class="st" style="left:3px;width:350px"><span style="left:5px">Estação: Departamento 1</span></div>
<div class="st" style="left:353px;width:485px"><span style="left:5px">Usuário: (900) Usuário master do sistema</span></div>
<div class="st" style="left:838px;width:320px;text-align:center"><span style="left:0;right:0">Modo demostração</span></div>
<div class="a" style="left:0px;top:0px;width:1161px;height:993px;border:1px solid #188a8c"></div>
</body></html>
